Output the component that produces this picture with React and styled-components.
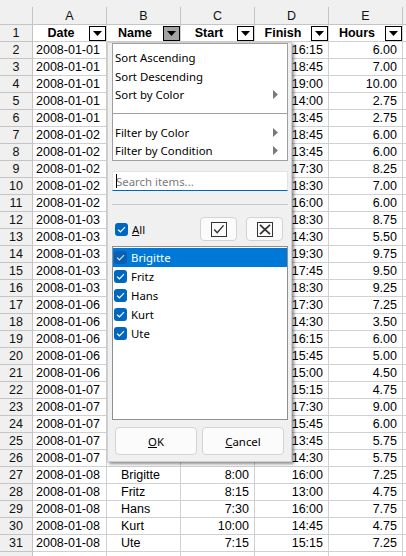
import React from "react";
import styled, { createGlobalStyle } from "styled-components";

const GlobalStyle = createGlobalStyle`
  html, body { margin: 0; padding: 0; background: #fff; }
  body { width: 406px; height: 556px; overflow: hidden; font-family: "Liberation Sans", Arial, sans-serif; }
  * { box-sizing: border-box; }
`;

const Sheet = styled.div`
  position: relative;
  width: 406px;
  height: 556px;
  overflow: hidden;
  background: #fff;
`;

const TopStrip = styled.div`
  height: 7px;
  background: #f0f0f0;
`;

const Grid = styled.div`
  display: grid;
  grid-template-columns: 33px repeat(5, 74px) 1fr;
  grid-template-rows: 18px;
  grid-auto-rows: 17px;
`;

const HeadBase = styled.div`
  background: #f0f0f0;
  border-right: 1px solid #c4c4c4;
  border-bottom: 1px solid #c4c4c4;
  color: #111;
  font-size: 12.5px;
  display: flex;
  align-items: center;
  justify-content: center;
  line-height: 1;
`;

const Corner = styled(HeadBase)``;
const ColHead = styled(HeadBase)`
  padding-top: 1px;
`;
const RowHead = styled(HeadBase)``;

const Cell = styled.div`
  border-right: 1px solid #d0d0d0;
  border-bottom: 1px solid #d0d0d0;
  background: #fff;
  color: #000;
  font-size: 12.5px;
  line-height: 16px;
  white-space: nowrap;
  overflow: hidden;
  text-align: ${(p) => (p.$align === "right" ? "right" : "left")};
  padding: ${(p) =>
    p.$align === "right" ? "0 5px 0 0" : p.$indent ? "0 0 0 14px" : "0 0 0 3px"};
`;

const HeaderCell = styled.div`
  border-right: 1px solid #d0d0d0;
  border-bottom: 1px solid #d0d0d0;
  background: #fff;
  display: flex;
  align-items: center;
`;

const HeaderLabel = styled.span`
  flex: 1;
  text-align: center;
  font-weight: bold;
  font-size: 12.5px;
  color: #000;
  white-space: nowrap;
`;

const FilterButton = styled.span`
  width: 17px;
  height: 15px;
  border: 1px solid #000;
  background: ${(p) => (p.$active ? "#a3a3a3" : "#fff")};
  display: flex;
  align-items: center;
  justify-content: center;
  flex: none;
`;

/* ---------- popup ---------- */

const Popup = styled.div`
  position: absolute;
  left: 107px;
  top: 42px;
  width: 185px;
  height: 420px;
  background: #f0f0f0;
  border: 1px solid #cfcfcf;
  box-shadow: 2px 2px 3px rgba(0, 0, 0, 0.45);
  padding: 0 3px 0 4px;
  display: flex;
  flex-direction: column;
  font-family: "Noto Sans", "Open Sans", sans-serif;
  font-size: 11.4px;
  color: #000;
`;

const MenuBox = styled.div`
  background: #fff;
  border: 1px solid #a0a0a0;
  padding-top: 4px;
  height: 118px;
  display: flex;
  flex-direction: column;
`;

const MenuItem = styled.div`
  height: 19px;
  display: flex;
  align-items: center;
  justify-content: space-between;
  padding: 0 9px 0 2px;
  white-space: nowrap;
`;

const MenuSep = styled.div`
  height: 19px;
  display: flex;
  align-items: center;
  &::after {
    content: "";
    flex: 1;
    height: 1px;
    background: #a0a0a0;
  }
`;

const SearchBox = styled.div`
  margin-top: 10px;
  height: 20px;
  background: #fff;
  border: 1px solid #e3e3e3;
  border-bottom: 1px solid #0067c0;
  display: flex;
  align-items: center;
  padding-left: 3px;
  color: #7b7b7b;
`;

const Caret = styled.span`
  width: 1px;
  height: 14px;
  background: #000;
  margin-right: -1px;
  position: relative;
  z-index: 1;
`;

const Divider = styled.div`
  margin-top: 13px;
  height: 1px;
  background: #c9c9c9;
`;

const AllRow = styled.div`
  margin-top: 12px;
  height: 24px;
  display: flex;
  align-items: center;
  padding: 0 5px 0 3px;
`;

const AllLabel = styled.span`
  margin-left: 4px;
  flex: 1;
`;

const IconButton = styled.div`
  width: 37px;
  height: 24px;
  background: #fbfbfb;
  border: 1px solid #d3d3d3;
  border-radius: 4px;
  display: flex;
  align-items: center;
  justify-content: center;
  margin-left: ${(p) => (p.$gap ? "9px" : "0")};
`;

const ListBox = styled.div`
  margin-top: 5px;
  height: 174px;
  background: #fff;
  border: 1px solid #8f8f8f;
  padding-top: 1px;
  display: flex;
  flex-direction: column;
`;

const ListItem = styled.div`
  height: 19px;
  display: flex;
  align-items: center;
  padding-left: 1px;
  background: ${(p) => (p.$selected ? "#0078d7" : "transparent")};
  color: ${(p) => (p.$selected ? "#fff" : "#000")};
`;

const ItemText = styled.span`
  margin-left: 4px;
`;

const Box = styled.span`
  width: 13px;
  height: 13px;
  border-radius: 3px;
  background: ${(p) => (p.$dim ? "#0a5fb0" : "#0067c0")};
  display: inline-flex;
  align-items: center;
  justify-content: center;
  flex: none;
`;

const ButtonRow = styled.div`
  margin-top: 7px;
  display: flex;
  gap: 5px;
  padding-left: 3px;
`;

const PushButton = styled.div`
  width: 82px;
  height: 28px;
  background: #fbfbfb;
  border: 1px solid #d3d3d3;
  border-radius: 4px;
  display: flex;
  align-items: center;
  justify-content: center;
`;

const Arrow = () => (
  <svg width="5" height="9" viewBox="0 0 5 9">
    <polygon points="0,0 5,4.5 0,9" fill="#7a7a7a" />
  </svg>
);

const DownTri = () => (
  <svg width="9" height="5" viewBox="0 0 9 5">
    <polygon points="0,0 9,0 4.5,5" fill="#000" />
  </svg>
);

const Check = ({ color = "#fff" }) => (
  <Box $dim={color !== "#fff"}>
    <svg width="9" height="7" viewBox="0 0 9 7">
      <polyline points="1,3.6 3.4,5.8 8,1.2" fill="none" stroke={color} strokeWidth="1.2" />
    </svg>
  </Box>
);

const CheckAllIcon = () => (
  <svg width="16" height="15" viewBox="0 0 16 15">
    <rect x="0.5" y="0.5" width="15" height="14" fill="none" stroke="#333" strokeWidth="1" />
    <polyline points="3.2,7.6 6.2,10.8 12.6,3.4" fill="none" stroke="#333" strokeWidth="1.4" />
  </svg>
);

const UncheckAllIcon = () => (
  <svg width="16" height="15" viewBox="0 0 16 15">
    <rect x="0.5" y="0.5" width="15" height="14" fill="none" stroke="#333" strokeWidth="1" />
    <line x1="3" y1="2.8" x2="13" y2="12.2" stroke="#333" strokeWidth="1.8" />
    <line x1="13" y1="2.8" x2="3" y2="12.2" stroke="#333" strokeWidth="1.8" />
  </svg>
);

/* ---------- data ---------- */

const names = ["Brigitte", "Fritz", "Hans", "Kurt", "Ute"];
const dates = ["2008-01-01", "2008-01-02", "2008-01-03", "2008-01-06", "2008-01-07", "2008-01-08"];
const finishHours = [
  ["16:15", "6.00"], ["18:45", "7.00"], ["19:00", "10.00"], ["14:00", "2.75"], ["13:45", "2.75"],
  ["18:45", "6.00"], ["13:45", "6.00"], ["17:30", "8.25"], ["18:30", "7.00"], ["16:00", "6.00"],
  ["18:30", "8.75"], ["14:30", "5.50"], ["19:30", "9.75"], ["17:45", "9.50"], ["18:30", "9.25"],
  ["17:30", "7.25"], ["14:30", "3.50"], ["16:15", "6.00"], ["15:45", "5.00"], ["15:00", "4.50"],
  ["15:15", "4.75"], ["17:30", "9.00"], ["15:45", "6.00"], ["13:45", "5.75"], ["14:30", "5.75"],
  ["16:00", "7.25"], ["13:00", "4.75"], ["16:00", "7.75"], ["14:45", "4.75"], ["15:15", "7.25"],
];
const starts = [
  "10:15", "11:45", "9:00", "11:15", "11:00",
  "12:45", "7:45", "9:15", "11:30", "10:00",
  "9:45", "9:00", "9:45", "8:15", "9:15",
  "10:15", "11:00", "10:15", "10:45", "10:30",
  "10:30", "8:30", "9:45", "8:00", "8:00",
  "8:00", "8:15", "7:30", "10:00", "7:15",
];

const rows = finishHours.map((fh, i) => ({
  date: dates[Math.floor(i / 5)],
  name: names[i % 5],
  start: starts[i],
  finish: fh[0],
  hours: fh[1],
}));

const headers = [
  { label: "Date" },
  { label: "Name", active: true },
  { label: "Start" },
  { label: "Finish" },
  { label: "Hours" },
];

export default function App() {
  return (
    <>
      <GlobalStyle />
      <Sheet>
        <TopStrip />
        <Grid>
          <Corner />
          {["A", "B", "C", "D", "E"].map((l) => (
            <ColHead key={l}>{l}</ColHead>
          ))}
          <ColHead />

          <RowHead>1</RowHead>
          {headers.map((h) => (
            <HeaderCell key={h.label}>
              <HeaderLabel>{h.label}</HeaderLabel>
              <FilterButton $active={h.active}>
                <DownTri />
              </FilterButton>
            </HeaderCell>
          ))}
          <Cell />

          {rows.map((r, i) => (
            <React.Fragment key={i}>
              <RowHead>{i + 2}</RowHead>
              <Cell>{r.date}</Cell>
              <Cell $indent>{r.name}</Cell>
              <Cell $align="right">{r.start}</Cell>
              <Cell $align="right">{r.finish}</Cell>
              <Cell $align="right">{r.hours}</Cell>
              <Cell />
            </React.Fragment>
          ))}
          <RowHead />
          <Cell />
          <Cell />
          <Cell />
          <Cell />
          <Cell />
          <Cell />
        </Grid>

        <Popup>
          <MenuBox>
            <MenuItem>Sort Ascending</MenuItem>
            <MenuItem>Sort Descending</MenuItem>
            <MenuItem>
              Sort by Color <Arrow />
            </MenuItem>
            <MenuSep />
            <MenuItem>
              Filter by Color <Arrow />
            </MenuItem>
            <MenuItem>
              Filter by Condition <Arrow />
            </MenuItem>
          </MenuBox>

          <SearchBox>
            <Caret />
            Search items...
          </SearchBox>

          <Divider />

          <AllRow>
            <Check />
            <AllLabel>
              <u>A</u>ll
            </AllLabel>
            <IconButton>
              <CheckAllIcon />
            </IconButton>
            <IconButton $gap>
              <UncheckAllIcon />
            </IconButton>
          </AllRow>

          <ListBox>
            {names.map((n, i) => (
              <ListItem key={n} $selected={i === 0}>
                <Check color={i === 0 ? "#cfe3f7" : "#fff"} />
                <ItemText>{n}</ItemText>
              </ListItem>
            ))}
          </ListBox>

          <ButtonRow>
            <PushButton>
              <span>
                <u>O</u>K
              </span>
            </PushButton>
            <PushButton>
              <span>
                <u>C</u>ancel
              </span>
            </PushButton>
          </ButtonRow>
        </Popup>
      </Sheet>
    </>
  );
}
